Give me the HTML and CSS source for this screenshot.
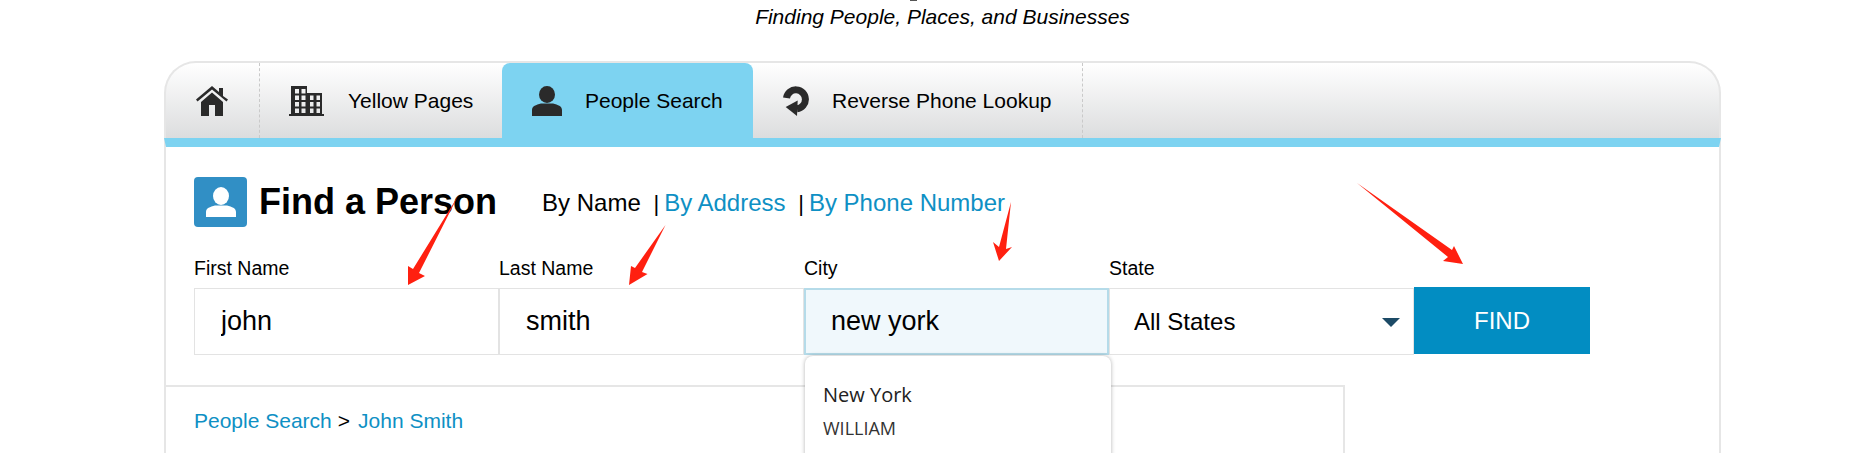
FILE: index.html
```html
<!DOCTYPE html>
<html lang="en">
<head>
  <meta charset="UTF-8">
  <title>Find a Person</title>
  <link rel="stylesheet" href="styles.css">
</head>
<body>
  <div class="page">
    <div class="header-cut"></div>
    <p class="tagline">Finding People, Places, and Businesses</p>

    <div class="card">
      <div class="tabs">
        <a class="tab tab-home" href="#">
          <svg width="32" height="30" viewBox="0 0 32 30"><path d="M0 13.500 16 0l7 6V2h4v8l5 3.500-1.500 2L16 3.500 1.500 15.500z"/><path d="M5 16 16 6.500 27 16v14h-8V19h-6v11H5z"/></svg>
        </a>
        <a class="tab tab-yellow" href="#">
          <svg width="35" height="30" viewBox="0 0 35 30"><path fill-rule="evenodd" d="M2 0h16v7h15v21h2v2H0v-2h2zM6 3V7.500h4V3zm6.500 0V7.500h4V3zM6 9.500V14h4V9.500zm6.500 0V14h4V9.500zM6 16V20.500h4V16zm6.500 0V20.500h4V16zM6 22.500V27h4v-4.500zm6.500 0V27h4v-4.500zM21 9.500V14h3.500V9.500zm6.500 0V14H31V9.500zM21 16V20.500h3.500V16zm6.500 0V20.500H31V16zM21 22.500V27h3.500v-4.500zm6.500 0V27H31v-4.500z"/></svg>
          <span>Yellow Pages</span>
        </a>
        <a class="tab tab-active" href="#">
          <svg width="30" height="30" viewBox="0 0 30 30"><ellipse cx="15" cy="8.500" rx="8" ry="8.500"/><path d="M0 30v-6c0-4 4-5 9-6.500h12c5 1.500 9 2.500 9 6.500v6z"/></svg>
          <span>People Search</span>
        </a>
        <a class="tab tab-reverse" href="#">
          <svg width="26" height="30" viewBox="0 0 26 30"><path d="M3.500 12A9.500 9.500 0 1 1 14 22.800" fill="none" stroke="#2a2a2a" stroke-width="7"/><path d="M2.700 21 14.700 14.500 14 30z"/></svg>
          <span>Reverse Phone Lookup</span>
        </a>
      </div>

      <div class="card-body">
        <div class="title-row">
          <span class="title-icon">
            <svg width="30" height="30" viewBox="0 0 30 30"><ellipse cx="15" cy="9" rx="8" ry="9"/><path d="M0 30v-5c0-4 4-5 9-6.500h12c5 1.500 9 2.500 9 6.500v5z"/></svg>
          </span>
          <h1>Find a Person</h1>
          <nav class="search-by">
            <span class="current">By Name</span>
            <span class="pipe">|</span><a href="#">By Address</a>
            <span class="pipe">|</span><a href="#">By Phone Number</a>
          </nav>
        </div>

        <form class="search-form">
          <div class="field">
            <label for="first">First Name</label>
            <input type="text" id="first" value="john">
          </div>
          <div class="field">
            <label for="last">Last Name</label>
            <input type="text" id="last" value="smith">
          </div>
          <div class="field field-city">
            <label for="city">City</label>
            <input type="text" id="city" value="new york">
            <div class="suggest">
              <div class="suggest-city">New York</div>
              <div class="suggest-name">WILLIAM</div>
            </div>
          </div>
          <div class="field field-state">
            <label for="state">State</label>
            <select id="state">
              <option>All States</option>
            </select>
          </div>
          <button type="button" class="find-btn">FIND</button>
        </form>

        <div class="results">
          <div class="crumbs"><a href="#">People Search</a><span class="crumb-sep">&gt;</span><a href="#">John Smith</a></div>
        </div>
      </div>
    </div>
  </div>

  <!-- red arrows drawn over the screenshot -->
  <svg class="arrows" width="1850" height="453" viewBox="0 0 1850 453">
    <path d="M458 196 419 273 425 276 408 285 408 266 413 269z"/>
    <path d="M665.500 225 642 272 647.500 274 629 285 631 266 635 268z"/>
    <path d="M1011 202 1006 249 1012 247 999 261 993 242 999 247z"/>
    <path d="M1357 183 1452 250 1454 246 1463 264 1443 261 1448 257z"/>
  </svg>
</body>
</html>
```

FILE: styles.css
```css
html, body {
  margin: 0;
  height: 453px;
  overflow: hidden;
  background: #fff;
}
body {
  font-family: "Liberation Sans", Arial, sans-serif;
  color: #000;
  position: relative;
}
a {
  color: #0e90c4;
  text-decoration: none;
}
.page {
  width: 1557px;
  margin-left: 164px;
}
.header-cut {
  width: 7px;
  height: 1px;
  margin-left: 746px;
  background: #555;
}
.tagline {
  margin: 4px 0 33px;
  height: 23px;
  line-height: 23px;
  font-size: 21px;
  font-style: italic;
  text-align: center;
}
.tabs {
  display: flex;
  height: 77px;
  box-sizing: border-box;
  border: 2px solid #e6e6e6;
  border-bottom: 0;
  border-radius: 32px 32px 0 0;
  background: linear-gradient(#fff, #dcddde);
}
.tab {
  display: flex;
  align-items: center;
  height: 75px;
  box-sizing: border-box;
  color: #000;
  font-size: 21px;
}
.tab svg {
  flex: none;
  fill: #2a2a2a;
}
.tab-home {
  width: 94px;
  padding-left: 30px;
  border-right: 1px dashed #c9c9c9;
}
.tab-yellow {
  width: 242px;
  padding-left: 29px;
}
.tab-yellow span {
  margin-left: 24px;
}
.tab-active {
  width: 251px;
  padding-left: 30px;
  background: #7dd3f1;
  border-radius: 8px 8px 0 0;
}
.tab-active span {
  margin-left: 23px;
}
.tab-reverse {
  width: 330px;
  padding-left: 30px;
  border-right: 1px dashed #c9c9c9;
}
.tab-reverse span {
  margin-left: 23px;
}
.card-body {
  height: 340px;
  box-sizing: border-box;
  border: 2px solid #e6e6e6;
  border-top: 9px solid #7dd3f1;
  padding: 30px 0 0 28px;
}
.title-row {
  display: flex;
  align-items: center;
  height: 50px;
}
.title-icon {
  display: flex;
  align-items: flex-end;
  justify-content: center;
  width: 53px;
  height: 50px;
  box-sizing: border-box;
  padding-bottom: 10px;
  background: #318fc5;
  border-radius: 4px;
}
.title-icon svg {
  fill: #fff;
}
h1 {
  margin: 0 0 0 12px;
  font-size: 36px;
  font-weight: bold;
  white-space: nowrap;
}
.search-by {
  margin-left: 45px;
  padding-top: 2px;
  font-size: 24px;
  white-space: nowrap;
}
.pipe {
  margin-left: 6px;
  margin-right: 5px;
  font-size: 22px;
}
.search-form {
  display: flex;
  align-items: flex-end;
  margin-top: 29px;
}
.field {
  position: relative;
  width: 305px;
}
.field label {
  display: block;
  height: 24px;
  line-height: 24px;
  margin-bottom: 8px;
  font-size: 19.5px;
}
.field input, .field select {
  display: block;
  width: 100%;
  height: 67px;
  box-sizing: border-box;
  border: 1px solid #e3e3e3;
  padding: 0 0 0 26px;
  background: #fff;
  font-family: inherit;
  font-size: 27px;
  color: #000;
  border-radius: 0;
  outline: 0;
}
.field-city input {
  padding-left: 25px;
  background: #f0f8fc;
  border: 2px solid #b5dbe9;
}
.field-state select {
  -webkit-appearance: none;
  appearance: none;
  padding-left: 24px;
  font-size: 24px;
}
.field-state::after {
  content: "";
  position: absolute;
  right: 14px;
  bottom: 28px;
  border-left: 9px solid transparent;
  border-right: 9px solid transparent;
  border-top: 9px solid #1c4a66;
}
.find-btn {
  width: 176px;
  height: 67px;
  border: 0;
  background: #028dc2;
  color: #fff;
  font-family: inherit;
  font-size: 24px;
  margin-bottom: 1px;
}
.suggest {
  position: absolute;
  z-index: 2;
  left: 1px;
  top: 100px;
  width: 306px;
  height: 200px;
  box-sizing: border-box;
  padding: 25px 18px;
  background: #fff;
  border-radius: 8px;
  box-shadow: 0 0 4px rgba(0, 0, 0, 0.3);
  font-family: "Open Sans", sans-serif;
}
.suggest-city {
  font-size: 20px;
  line-height: 27px;
  color: #222;
}
.suggest-name {
  margin-top: 8px;
  font-size: 18px;
  line-height: 24px;
  color: #333;
}
.results {
  width: 1179px;
  height: 100px;
  margin: 30px 0 0 -28px;
  box-sizing: border-box;
  border-top: 2px solid #e6e6e6;
  border-right: 2px solid #e6e6e6;
  padding: 22px 0 0 28px;
}
.crumbs {
  font-size: 21px;
  line-height: 24px;
}
.crumb-sep {
  margin: 0 8px 0 6px;
}
.arrows {
  position: absolute;
  left: 0;
  top: 0;
  z-index: 3;
  fill: #ff2010;
  pointer-events: none;
}
```
